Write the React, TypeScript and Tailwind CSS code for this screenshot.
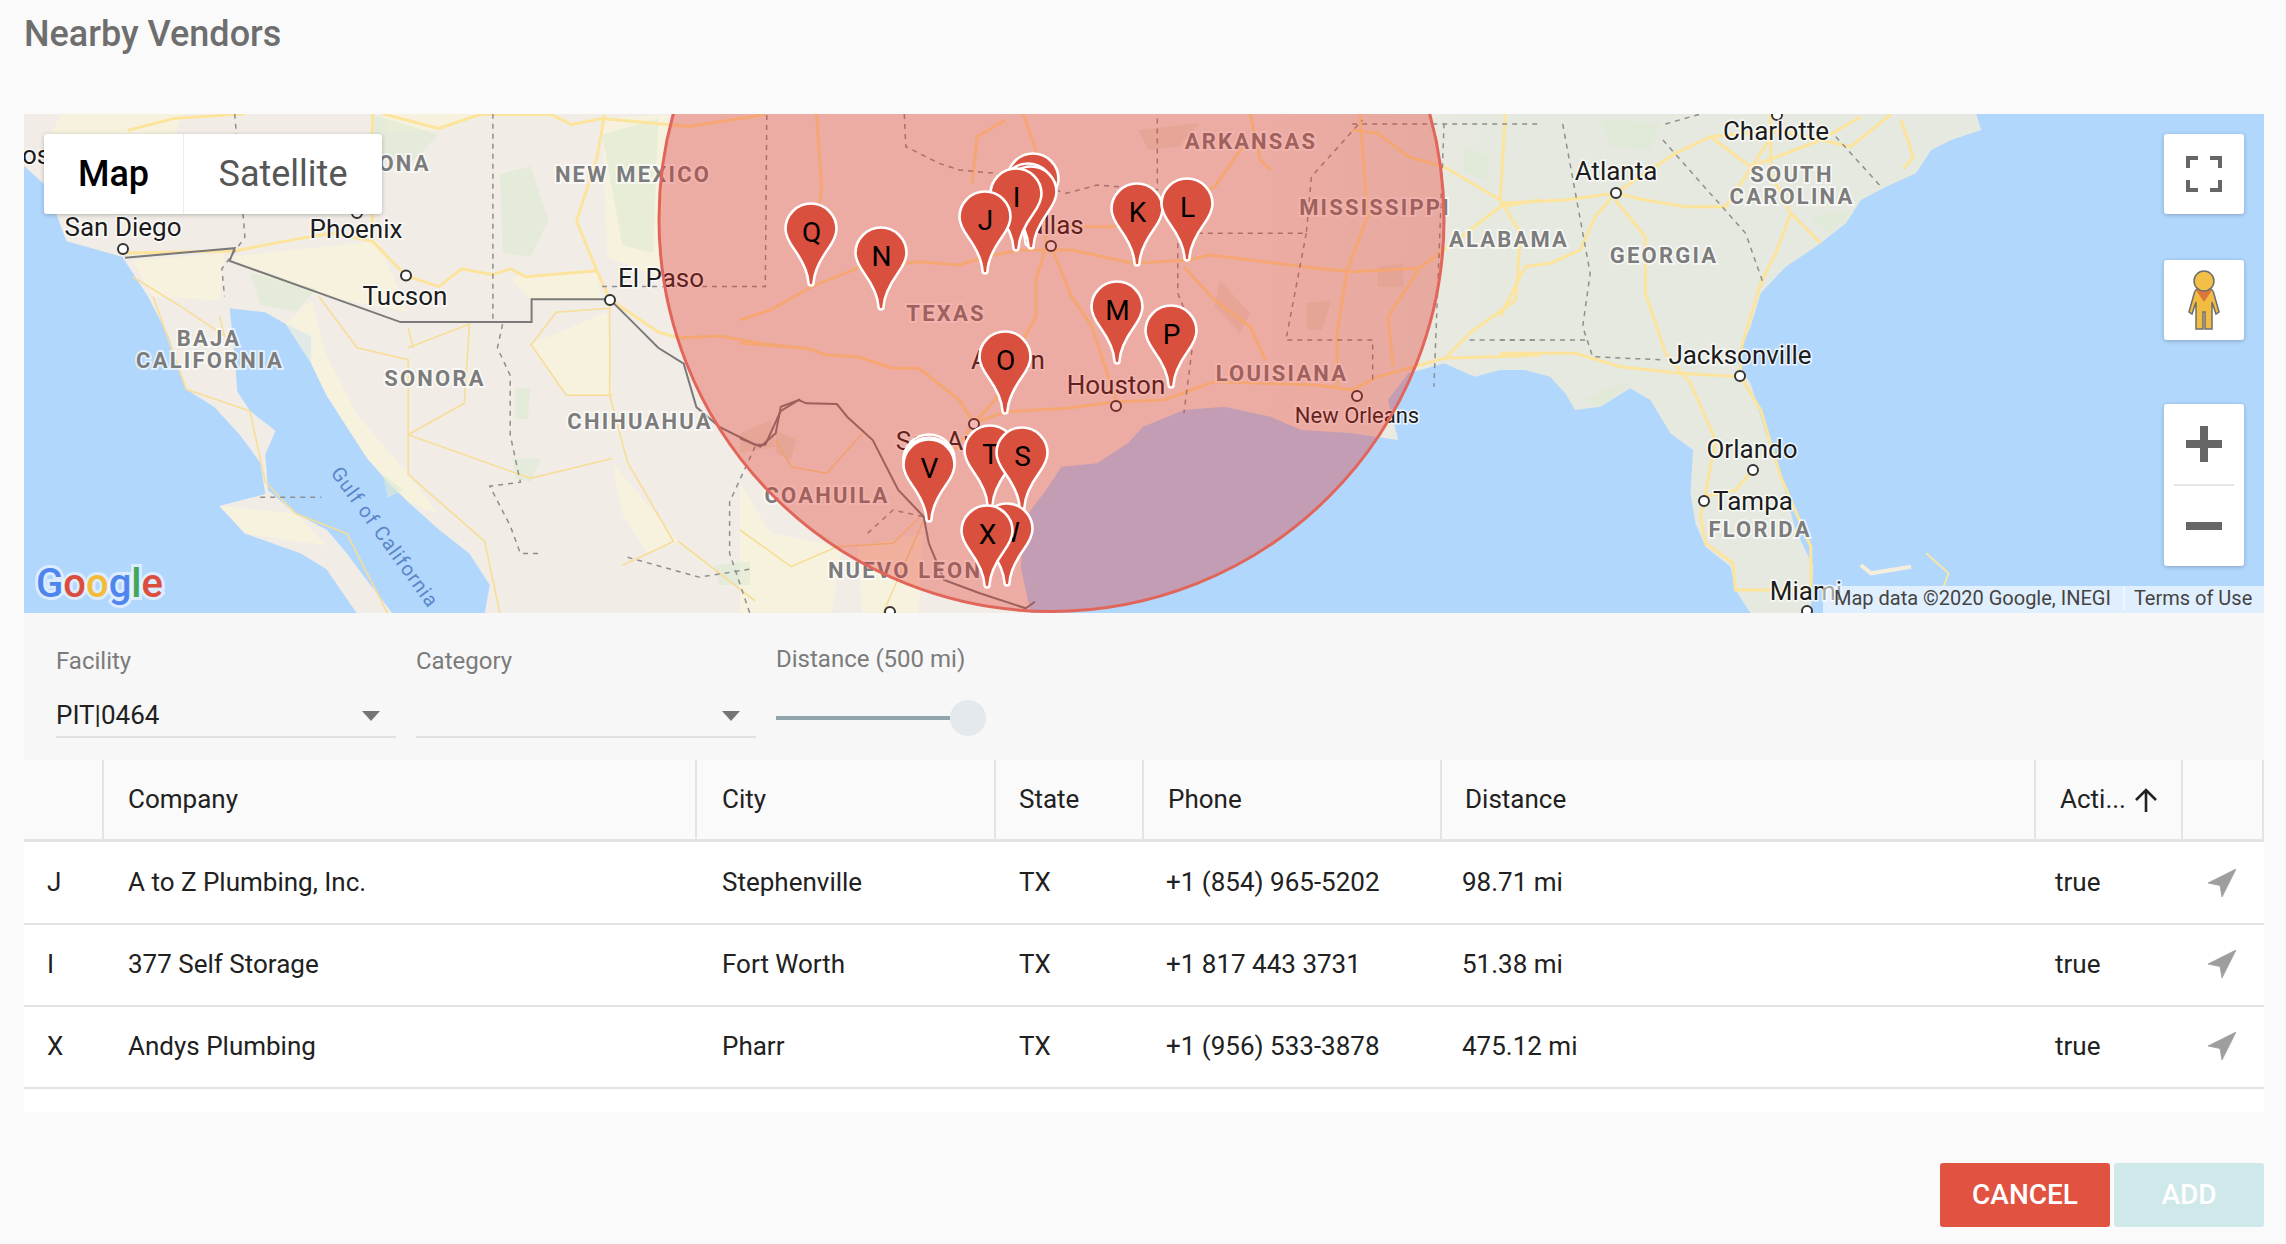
// zoom crop frames -> page pixels, the map is drawn in page coordinates
const frame = (ox: number, oy: number, sx: number, sy: number) => (s: string) =>
  s
    .trim()
    .split(/\s+/)
    .map((p) => {
      const [x, y] = p.split(",").map(Number);
      return `${(ox + x / sx).toFixed(1)},${(oy + y / sy).toFixed(1)}`;
    })
    .join(" ");
const z1 = frame(0, 0, 1.96, 2.53);
const z2 = frame(740, 100, 1.96, 3);
const z3 = frame(1500, 100, 1.995, 3);

const LAND = [
  "24,114 1980,114",
  z3("950,42 960,90 900,120 860,150 830,220 770,260 720,300 690,370 630,440 570,500 520,580 500,680 470,780 500,850 530,1000 560,1130 590,1290 625,1400 620,1540 500,1540 470,1470 460,1400 410,1340 390,1270 380,1180 385,1050 340,1000 300,900 260,865 200,920 150,930 130,880 100,830 50,810 0,810"),
  z2("1440,830 1380,790 1310,820 1270,900 1290,1020 1200,1000 1100,990 1040,950 950,920 870,930 790,980 760,1030 700,1090 630,1100 600,1170 560,1250 550,1400 570,1540"),
  z1("950,1553 960,1480 920,1400 860,1340 800,1270 760,1220 720,1160 680,1080 640,1000 610,920 610,850 560,820 520,790 450,780 460,900 465,990 490,1040 540,1090 520,1150 525,1240 580,1300 640,1340 680,1400 720,1470 770,1553 700,1553 640,1440 590,1400 480,1350 430,1280 520,1250 510,1170 470,1100 420,1030 365,985 330,850 290,750 265,700 240,650 130,610 90,470 47,420"),
].join(" ");

const YELLOW = [
  z1("560,820 610,760 640,900 700,1050 800,1200 860,1300 800,1270 720,1160 640,1000 610,920"),
  z1("450,650 740,610 800,790 620,745 520,700"),
  z1("750,288 940,288 860,330 760,330"),
  z1("1040,870 1190,790 1200,1000 1110,1000"),
  z1("1000,700 1170,690 1180,760 1040,760"),
  z1("120,288 360,288 340,340 100,340"),
  z1("260,660 440,640 430,760 300,750"),
  z1("1180,300 1310,290 1290,700 1190,650"),
  z1("430,1280 580,1300 640,1380 480,1350"),
  z1("1200,1170 1330,1370 1270,1400 1220,1300"),
  z2("0,1150 60,1300 200,1340 180,1540 0,1540"),
  z2("230,1340 360,1300 350,1540 240,1540"),
];
const GREEN = [
  z1("980,440 1040,420 1075,560 1040,650 985,640"),
  z1("1180,340 1290,300 1280,640 1220,620"),
  z1("490,690 620,730 580,790 510,770"),
  z1("730,290 860,340 800,420 740,400"),
  z1("1010,980 1040,980 1035,1060 1010,1060"),
  z1("1005,1160 1060,1160 1040,1220 1010,1210"),
  z1("1400,1430 1470,1420 1470,1480 1410,1480"),
  z1("750,1200 790,1240 760,1260"),
  z2("1420,140 1470,170 1460,240 1420,220"),
  z3("200,60 320,70 300,150 220,140"),
  z3("620,350 700,330 660,400"),
  z3("220,860 260,850 200,920 170,900"),
];
const SAND = [
  z2("780,90 900,70 860,140 800,150"),
  z2("940,540 1000,640 980,700 930,620"),
  z2("1250,500 1300,490 1300,560 1250,560"),
  z2("1110,610 1160,600 1140,690 1110,690"),
  z2("0,1000 60,960 70,1040 0,1060"),
  z2("70,990 110,1020 100,1080 70,1060"),
];

const ROADS_MAJOR = [
  z2("0,660 60,630 140,560 230,505 350,485 430,495 480,470 550,450 650,450 770,490 880,480 920,465 1130,505 1200,515 1330,505 1380,450 1490,320 1568,300"),
  z2("0,730 130,745 170,765 230,770 300,805 350,805 430,900 458,970 520,935 640,925 737,905 830,900 930,845 1130,855 1200,870 1250,830 1380,775 1480,770 1568,765"),
  z2("555,42 580,150 600,440 580,540 580,650 540,760 500,900 458,970 420,1050"),
  z2("610,440 650,590 690,680 737,900"),
  z2("610,380 730,380 800,350 930,260 990,130"),
  z2("870,500 930,600 1000,680 1030,780"),
  z2("1215,42 1230,350 1190,510 1170,700 1170,860"),
  z2("150,42 160,260 140,560"),
  z2("455,250 465,110 520,60"),
  z2("1000,42 1020,180 1040,210"),
  z2("1200,90 1250,100 1310,170 1380,200 1490,300 1500,42"),
  z2("1490,300 1530,400 1520,600 1430,700 1385,770"),
  z2("1280,800 1270,650 1330,510"),
  z3("0,310 130,300 230,280 290,300 370,320 450,320 550,90"),
  z3("230,280 350,160 420,110 550,90 700,140 780,42"),
  z3("230,280 190,350 160,450 100,490 50,500 0,650"),
  z3("230,300 290,410 290,580 330,760 380,850 430,1020 410,1180 400,1250 410,1330 465,1390 470,1470 620,1470"),
  z3("0,760 150,760 240,800 360,820 480,830 520,930 560,1130 620,1340 620,1470"),
  z3("540,42 540,220 580,340 550,460 520,550 480,750 480,830"),
  z3("420,110 500,200 640,120 720,50"),
  z3("580,340 640,430"),
  z3("505,1110 470,1170 410,1190"),
  z3("800,60 825,170 805,205"),
  z1("245,640 460,635 560,610 650,590 730,610 795,697 860,725 905,680 965,695 1000,680 1030,700 1170,685 1195,757 1290,840 1330,855 1410,850 1500,870 1568,880"),
  z1("1170,685 1130,560 1170,400 1185,290"),
  z1("250,330 340,300 480,288"),
  z1("730,288 730,610"),
  z1("750,288 860,325 940,290 1080,290 1120,315 1180,300 1350,320 1500,290"),
];
const ROADS_MINOR = [
  z1("1195,760 1195,1000 1230,1170 1320,1370 1270,1400 1220,1430"),
  z1("1040,870 1110,1000 1200,1000"),
  z1("800,1100 910,1020 920,820 800,880"),
  z1("800,1100 1040,1210 1200,1160"),
  z1("625,750 700,880 800,910 800,1100 800,1200 950,1370 980,1553"),
  z1("800,830 810,880"),
  z1("1040,875 1090,790 1195,780"),
  z1("260,700 360,780 440,850 430,800"),
  z1("300,750 365,985 490,1040 500,1100 520,1220 580,1300 680,1350 760,1553"),
  z1("1330,1370 1480,1520"),
  z2("0,1290 100,1400 190,1340 300,1330 360,1240"),
  z2("70,1020 100,1100 170,1120 240,1000"),
  z2("280,1540 360,1260"),
];
const MEX_BORDER = [
  z1("245,652 460,628 450,660 785,815 1042,815 1042,757 1195,757 1240,815 1290,880 1340,920 1365,1030 1410,1080 1480,1125 1500,1125 1530,1040 1568,1010"),
  z2("0,1015 40,1040 70,1000 80,920 115,900 130,910 190,912 210,950 260,1020 310,1170 360,1250 370,1330 400,1440 470,1480 560,1525 578,1505"),
];
const STATE_LINES = [
  z1("966,288 966,815"),
  z1("1180,725 1500,725 1503,288"),
  z1("985,820 975,880 1000,950 1000,1100 1020,1220 960,1230 1000,1330 1020,1400 1060,1400"),
  z1("1230,1410 1370,1460 1470,1440"),
  z1("510,1258 630,1258"),
  z1("460,288 480,600 435,680 440,750"),
  z1("1480,1130 1430,1270 1430,1400 1470,1553"),
  z2("322,42 325,140 390,190 430,210 500,220 640,280 700,255 818,270 818,42"),
  z2("858,400 1110,400 1120,230 1220,60"),
  z2("858,400 858,580 890,700 870,940"),
  z2("1110,400 1070,720 1240,720 1240,850"),
  z2("1380,70 1360,860"),
  z2("1200,72 1568,72"),
  z2("250,1300 300,1230 360,1250"),
  z2("1430,720 1568,720"),
  z3("125,72 180,520 165,680 185,770 330,780"),
  z3("0,720 175,720"),
  z3("325,120 490,400 525,550"),
  z3("330,72 400,42"),
  z3("670,110 760,260"),
];

const CITIES: [string, number, number, number?][] = [
  ["San Diego", 123, 227],
  ["Phoenix", 356, 229],
  ["Tucson", 405, 296],
  ["El Paso", 661, 278],
  ["Dallas", 1048, 225],
  ["Austin", 1008, 360],
  ["Houston", 1116, 385],
  ["New Orleans", 1357, 414, 22],
  ["San Antonio", 966, 441],
  ["Atlanta", 1616, 171],
  ["Charlotte", 1776, 131],
  ["Jacksonville", 1740, 355],
  ["Orlando", 1752, 449],
  ["Tampa", 1753, 501],
  ["Miami", 1806, 591],
  ["Los Angeles", 79, 155],
];
const DOTS = [
  [123, 249], [406, 275.5], [610, 300], [357, 213], [1051, 246], [1116, 406], [1357, 396], [974, 424],
  [1616, 193], [1740, 376], [1753, 470], [1704, 501], [1807, 611], [1777, 115], [890, 612],
];
const REGIONS: [string, number, number][] = [
  ["ARIZONA", 376, 163],
  ["NEW MEXICO", 633, 174],
  ["BAJA", 209, 338],
  ["CALIFORNIA", 210, 360],
  ["SONORA", 435, 378],
  ["CHIHUAHUA", 640, 421],
  ["COAHUILA", 827, 495],
  ["NUEVO LEON", 905, 570],
  ["TEXAS", 946, 313],
  ["ARKANSAS", 1251, 141],
  ["MISSISSIPPI", 1375, 207],
  ["LOUISIANA", 1282, 373],
  ["ALABAMA", 1509, 239],
  ["GEORGIA", 1664, 255],
  ["SOUTH", 1792, 174],
  ["CAROLINA", 1792, 196],
  ["FLORIDA", 1760, 529],
];
// painted back to front
const PINS: [number, number, string][] = [
  [1033, 153, ""],
  [1028, 163, ""],
  [1031, 166, ""],
  [1016, 168, "I"],
  [985, 191, "J"],
  [1137, 183, "K"],
  [1187, 178, "L"],
  [1117, 281, "M"],
  [1171, 305, "P"],
  [881, 227, "N"],
  [811, 203, "Q"],
  [1005, 331, "O"],
  [929, 434, ""],
  [929, 437, ""],
  [929, 439, "V"],
  [990, 425, "T"],
  [1022, 427, "S"],
  [1007, 503, "W"],
  [987, 505, "X"],
];

function Pin({ x, y, letter }: { x: number; y: number; letter: string }) {
  return (
    <g transform={`translate(${x} ${y})`}>
      <path
        d="M -2.5 80 C -3 70 -7 60 -17 46 C -22 39 -25.5 33 -25.5 26 A 25.5 25.5 0 0 1 25.5 26 C 25.5 33 22 39 17 46 C 7 60 3 70 2.5 80 A 2.5 2.5 0 0 1 -2.5 80 Z"
        fill="#d9503e"
        stroke="#ffffff"
        strokeWidth="2.6"
      />
      {letter && (
        <text x="0.5" y="38.5" textAnchor="middle" fontSize="28" fill="#000000">
          {letter}
        </text>
      )}
    </g>
  );
}

function MapCanvas() {
  return (
    <svg viewBox="24 114 2240 499" className="block h-full w-full">
      <defs>
        <linearGradient id="land" gradientUnits="userSpaceOnUse" x1="1250" y1="0" x2="1480" y2="0">
          <stop offset="0" stopColor="#f1ede6" />
          <stop offset="1" stopColor="#e6e9df" />
        </linearGradient>
      </defs>
      <rect x="24" y="114" width="2240" height="499" fill="#b2d7fd" />
      <polygon points={LAND} fill="url(#land)" />
      {YELLOW.map((p, i) => (
        <polygon key={i} points={p} fill="#fbf5da" fillOpacity="0.65" />
      ))}
      {GREEN.map((p, i) => (
        <polygon key={i} points={p} fill="#dde9d3" fillOpacity="0.6" />
      ))}
      {SAND.map((p, i) => (
        <polygon key={i} points={p} fill="#dcd8bd" fillOpacity="0.45" />
      ))}
      <polyline points={z3("720,1395 740,1420 820,1400")} fill="none" stroke="#f4eedd" strokeWidth="4" />
      <polyline points={z3("850,1360 895,1420 885,1460")} fill="none" stroke="#f5e6a8" strokeWidth="2" />
      {ROADS_MINOR.map((p, i) => (
        <polyline key={i} points={p} fill="none" stroke="#f8dd97" strokeWidth="1.6" />
      ))}
      {ROADS_MAJOR.map((p, i) => (
        <polyline key={i} points={p} fill="none" stroke="#fde49c" strokeWidth="3" strokeLinejoin="round" />
      ))}
      {STATE_LINES.map((p, i) => (
        <polyline key={i} points={p} fill="none" stroke="#8f8f8f" strokeWidth="1.5" strokeDasharray="5 5" />
      ))}
      {MEX_BORDER.map((p, i) => (
        <polyline key={i} points={p} fill="none" stroke="#7a7a7a" strokeWidth="2" />
      ))}
      {DOTS.map(([x, y], i) => (
        <circle key={i} cx={x} cy={y} r="5" fill="#ffffff" stroke="#333333" strokeWidth="2" />
      ))}
      {REGIONS.map(([name, x, y]) => (
        <text
          key={name}
          x={x}
          y={y + 8}
          textAnchor="middle"
          fontSize="22"
          fontWeight="700"
          letterSpacing="2.2"
          fill="#7c7c7c"
          stroke="#ffffff"
          strokeOpacity="0.7"
          strokeWidth="3.5"
          paintOrder="stroke"
        >
          {name}
        </text>
      ))}
      {CITIES.map(([name, x, y, size]) => (
        <text
          key={name}
          x={x}
          y={y + 9}
          textAnchor="middle"
          fontSize={size ?? 26}
          fill="#1c1c1c"
          stroke="#ffffff"
          strokeOpacity="0.75"
          strokeWidth="3"
          paintOrder="stroke"
        >
          {name}
        </text>
      ))}
      <text
        transform="translate(385 537) rotate(54)"
        textAnchor="middle"
        fontSize="20"
        letterSpacing="1"
        fill="#5b87c9"
        y="7"
      >
        Gulf of California
      </text>
      <circle cx="1051.5" cy="219" r="392.5" fill="#e43022" fillOpacity="0.34" stroke="#e2655a" strokeWidth="3" />
      {PINS.map(([x, y, letter], i) => (
        <Pin key={i} x={x} y={y} letter={letter} />
      ))}
      <text
        x="36"
        y="597"
        fontSize="40"
        fontWeight="500"
        stroke="#ffffff"
        strokeOpacity="0.55"
        strokeWidth="6"
        paintOrder="stroke"
      >
        <tspan fill="#4e85ee">G</tspan>
        <tspan fill="#dc4d3d">o</tspan>
        <tspan fill="#f4bb36">o</tspan>
        <tspan fill="#4e85ee">g</tspan>
        <tspan fill="#43a559">l</tspan>
        <tspan fill="#dc4d3d">e</tspan>
      </text>
    </svg>
  );
}

function Pegman() {
  return (
    <svg viewBox="0 0 32 60" className="h-[60px] w-[32px]">
      <path
        d="M11 18 L21 18 C24 19 25 20 26 24 L31 42 L28 44 L24 32 L24 59 L17 59 L17 42 L15 42 L15 59 L8 59 L8 32 L4 44 L1 42 L6 24 C7 20 8 19 11 18 Z"
        fill="#f2bb41"
        stroke="#6d6d6d"
        strokeWidth="1.5"
      />
      <polygon points="8,20 24,20 16,32" fill="#d9773d" />
      <circle cx="16" cy="11" r="10" fill="#f2bf47" stroke="#6d6d6d" strokeWidth="1.5" />
    </svg>
  );
}

function SelectArrow() {
  return (
    <svg viewBox="0 0 18 10" className="h-[10px] w-[18px]">
      <polygon points="0,0 18,0 9,10" fill="#757575" />
    </svg>
  );
}

function NavIcon() {
  return (
    <svg viewBox="0 0 28 28" className="h-[28px] w-[28px]">
      <polygon points="28,0 0,14 12,16.5 14,28" fill="#9e9e9e" stroke="#9e9e9e" strokeWidth="0.8" strokeLinejoin="round" />
    </svg>
  );
}

const ROWS = [
  { key: "J", company: "A to Z Plumbing, Inc.", city: "Stephenville", phone: "+1 (854) 965-5202", dist: "98.71 mi", height: "h-[83px]" },
  { key: "I", company: "377 Self Storage", city: "Fort Worth", phone: "+1 817 443 3731", dist: "51.38 mi", height: "h-[82px] pb-[2px]" },
  { key: "X", company: "Andys Plumbing", city: "Pharr", phone: "+1 (956) 533-3878", dist: "475.12 mi", height: "h-[82px] pb-[2px]" },
];

export default function App() {
  return (
    <div className="flex h-[1244px] w-[2286px] flex-col overflow-hidden bg-[#fafafa] pl-[24px] pr-[22px] font-['Roboto',sans-serif] text-[#212121]">
      <div className="h-[114px] pt-[13px] text-[36px] font-medium leading-[42px] text-[#6e6e6e]">Nearby Vendors</div>

      <div className="relative h-[499px] overflow-hidden">
        <MapCanvas />

        <div className="absolute left-[20px] top-[20px] flex h-[80px] rounded-[3px] bg-white shadow-[0_1px_4px_rgba(0,0,0,0.25)]">
          <div className="flex w-[140px] items-center justify-center border-r border-[#ececec] text-[36px] font-medium text-black">Map</div>
          <div className="flex w-[198px] items-center justify-center text-[36px] text-[#565656]">Satellite</div>
        </div>

        <div className="absolute right-[20px] top-[20px] flex h-[80px] w-[80px] items-center justify-center rounded-[3px] bg-white shadow-[0_1px_4px_rgba(0,0,0,0.25)]">
          <svg viewBox="0 0 36 36" className="h-[36px] w-[36px]">
            <path d="M2 12 V2 H12 M24 2 H34 V12 M34 24 V34 H24 M12 34 H2 V24" fill="none" stroke="#666666" strokeWidth="4" />
          </svg>
        </div>
        <div className="absolute right-[20px] top-[146px] flex h-[80px] w-[80px] items-center justify-center rounded-[3px] bg-white shadow-[0_1px_4px_rgba(0,0,0,0.25)]">
          <Pegman />
        </div>
        <div className="absolute right-[20px] top-[290px] flex h-[162px] w-[80px] flex-col items-center rounded-[3px] bg-white shadow-[0_1px_4px_rgba(0,0,0,0.25)]">
          <div className="flex h-[80px] items-center justify-center">
            <svg viewBox="0 0 36 36" className="h-[36px] w-[36px]">
              <path d="M14 0 H22 V14 H36 V22 H22 V36 H14 V22 H0 V14 H14 Z" fill="#666666" />
            </svg>
          </div>
          <div className="h-[2px] w-[60px] bg-[#e6e6e6]" />
          <div className="flex h-[80px] items-center justify-center">
            <div className="h-[8px] w-[36px] bg-[#666666]" />
          </div>
        </div>

        <div className="absolute bottom-0 right-0 flex h-[27px] w-[441px] items-center bg-[#ffffff]/60 pb-[3px] text-[20px] leading-none text-[#444444]">
          <span className="pl-[11px] pr-[12px]">Map data ©2020 Google, INEGI</span>
          <span className="h-full w-[2px] bg-white/50" />
          <span className="pl-[9px]">Terms of Use</span>
        </div>
      </div>

      <div className="flex h-[147px] items-start gap-[20px] bg-[#f7f7f7] pl-[32px]">
        <div className="w-[340px]">
          <div className="pt-[35px] text-[24px] leading-[26px] text-[#7b7b7b]">Facility</div>
          <div className="mt-[22px] flex h-[42px] items-center justify-between border-b-2 border-[#e0e0e0] pr-[16px] text-[26px]">
            <span className="-mt-[2px]">PIT|0464</span>
            <SelectArrow />
          </div>
        </div>
        <div className="w-[340px]">
          <div className="pt-[35px] text-[24px] leading-[26px] text-[#7b7b7b]">Category</div>
          <div className="mt-[22px] flex h-[42px] items-center justify-end border-b-2 border-[#e0e0e0] pr-[16px]">
            <SelectArrow />
          </div>
        </div>
        <div className="w-[210px]">
          <div className="pt-[33px] text-[24px] leading-[26px] text-[#7b7b7b]">Distance (500 mi)</div>
          <div className="mt-[28px] flex h-[36px] items-center">
            <div className="h-[4px] w-[174px] bg-[#90a4ae]" />
            <div className="h-[36px] w-[36px] rounded-full bg-[#e3e9ed]" />
          </div>
        </div>
      </div>

      <div className="flex h-[82px] border-b-[3px] border-[#e4e4e4] bg-[#fafafa] text-[26px]">
        <div className="w-[80px] border-r-2 border-[#e4e4e4]" />
        <div className="flex w-[593px] items-center border-r-2 border-[#e4e4e4] pl-[24px]">Company</div>
        <div className="flex w-[299px] items-center border-r-2 border-[#e4e4e4] pl-[25px]">City</div>
        <div className="flex w-[148px] items-center border-r-2 border-[#e4e4e4] pl-[23px]">State</div>
        <div className="flex w-[298px] items-center border-r-2 border-[#e4e4e4] pl-[24px]">Phone</div>
        <div className="flex w-[594px] items-center border-r-2 border-[#e4e4e4] pl-[23px]">Distance</div>
        <div className="flex w-[147px] items-center border-r-2 border-[#e4e4e4] pl-[24px]">
          <span>Acti...</span>
          <svg viewBox="0 0 24 24" className="ml-[8px] h-[24px] w-[24px]">
            <path d="M12 24 V2 M2 12 L12 2 L22 12" fill="none" stroke="#212121" strokeWidth="2.6" />
          </svg>
        </div>
        <div className="w-[81px] border-r-2 border-[#e4e4e4]" />
      </div>

      <div className="h-[270px] bg-white text-[26px]">
        {ROWS.map((r) => (
          <div key={r.key} className={`flex items-center border-b-2 border-[#e4e4e4] ${r.height}`}>
            <div className="w-[79px] pl-[23px]">{r.key}</div>
            <div className="w-[593px] pl-[25px]">{r.company}</div>
            <div className="w-[299px] pl-[26px]">{r.city}</div>
            <div className="w-[148px] pl-[24px]">TX</div>
            <div className="w-[298px] pl-[23px]">{r.phone}</div>
            <div className="w-[594px] pl-[21px]">{r.dist}</div>
            <div className="w-[147px] pl-[20px]">true</div>
            <div className="w-[82px] pl-[26px]">
              <NavIcon />
            </div>
          </div>
        ))}
      </div>

      <div className="mt-[51px] flex justify-end gap-[4px]">
        <button className="h-[64px] w-[170px] rounded-[3px] bg-[#e25241] text-[28px] font-medium text-white">CANCEL</button>
        <button className="h-[64px] w-[150px] rounded-[3px] bg-[#cfe8ea] text-[28px] font-medium text-white">ADD</button>
      </div>
    </div>
  );
}
